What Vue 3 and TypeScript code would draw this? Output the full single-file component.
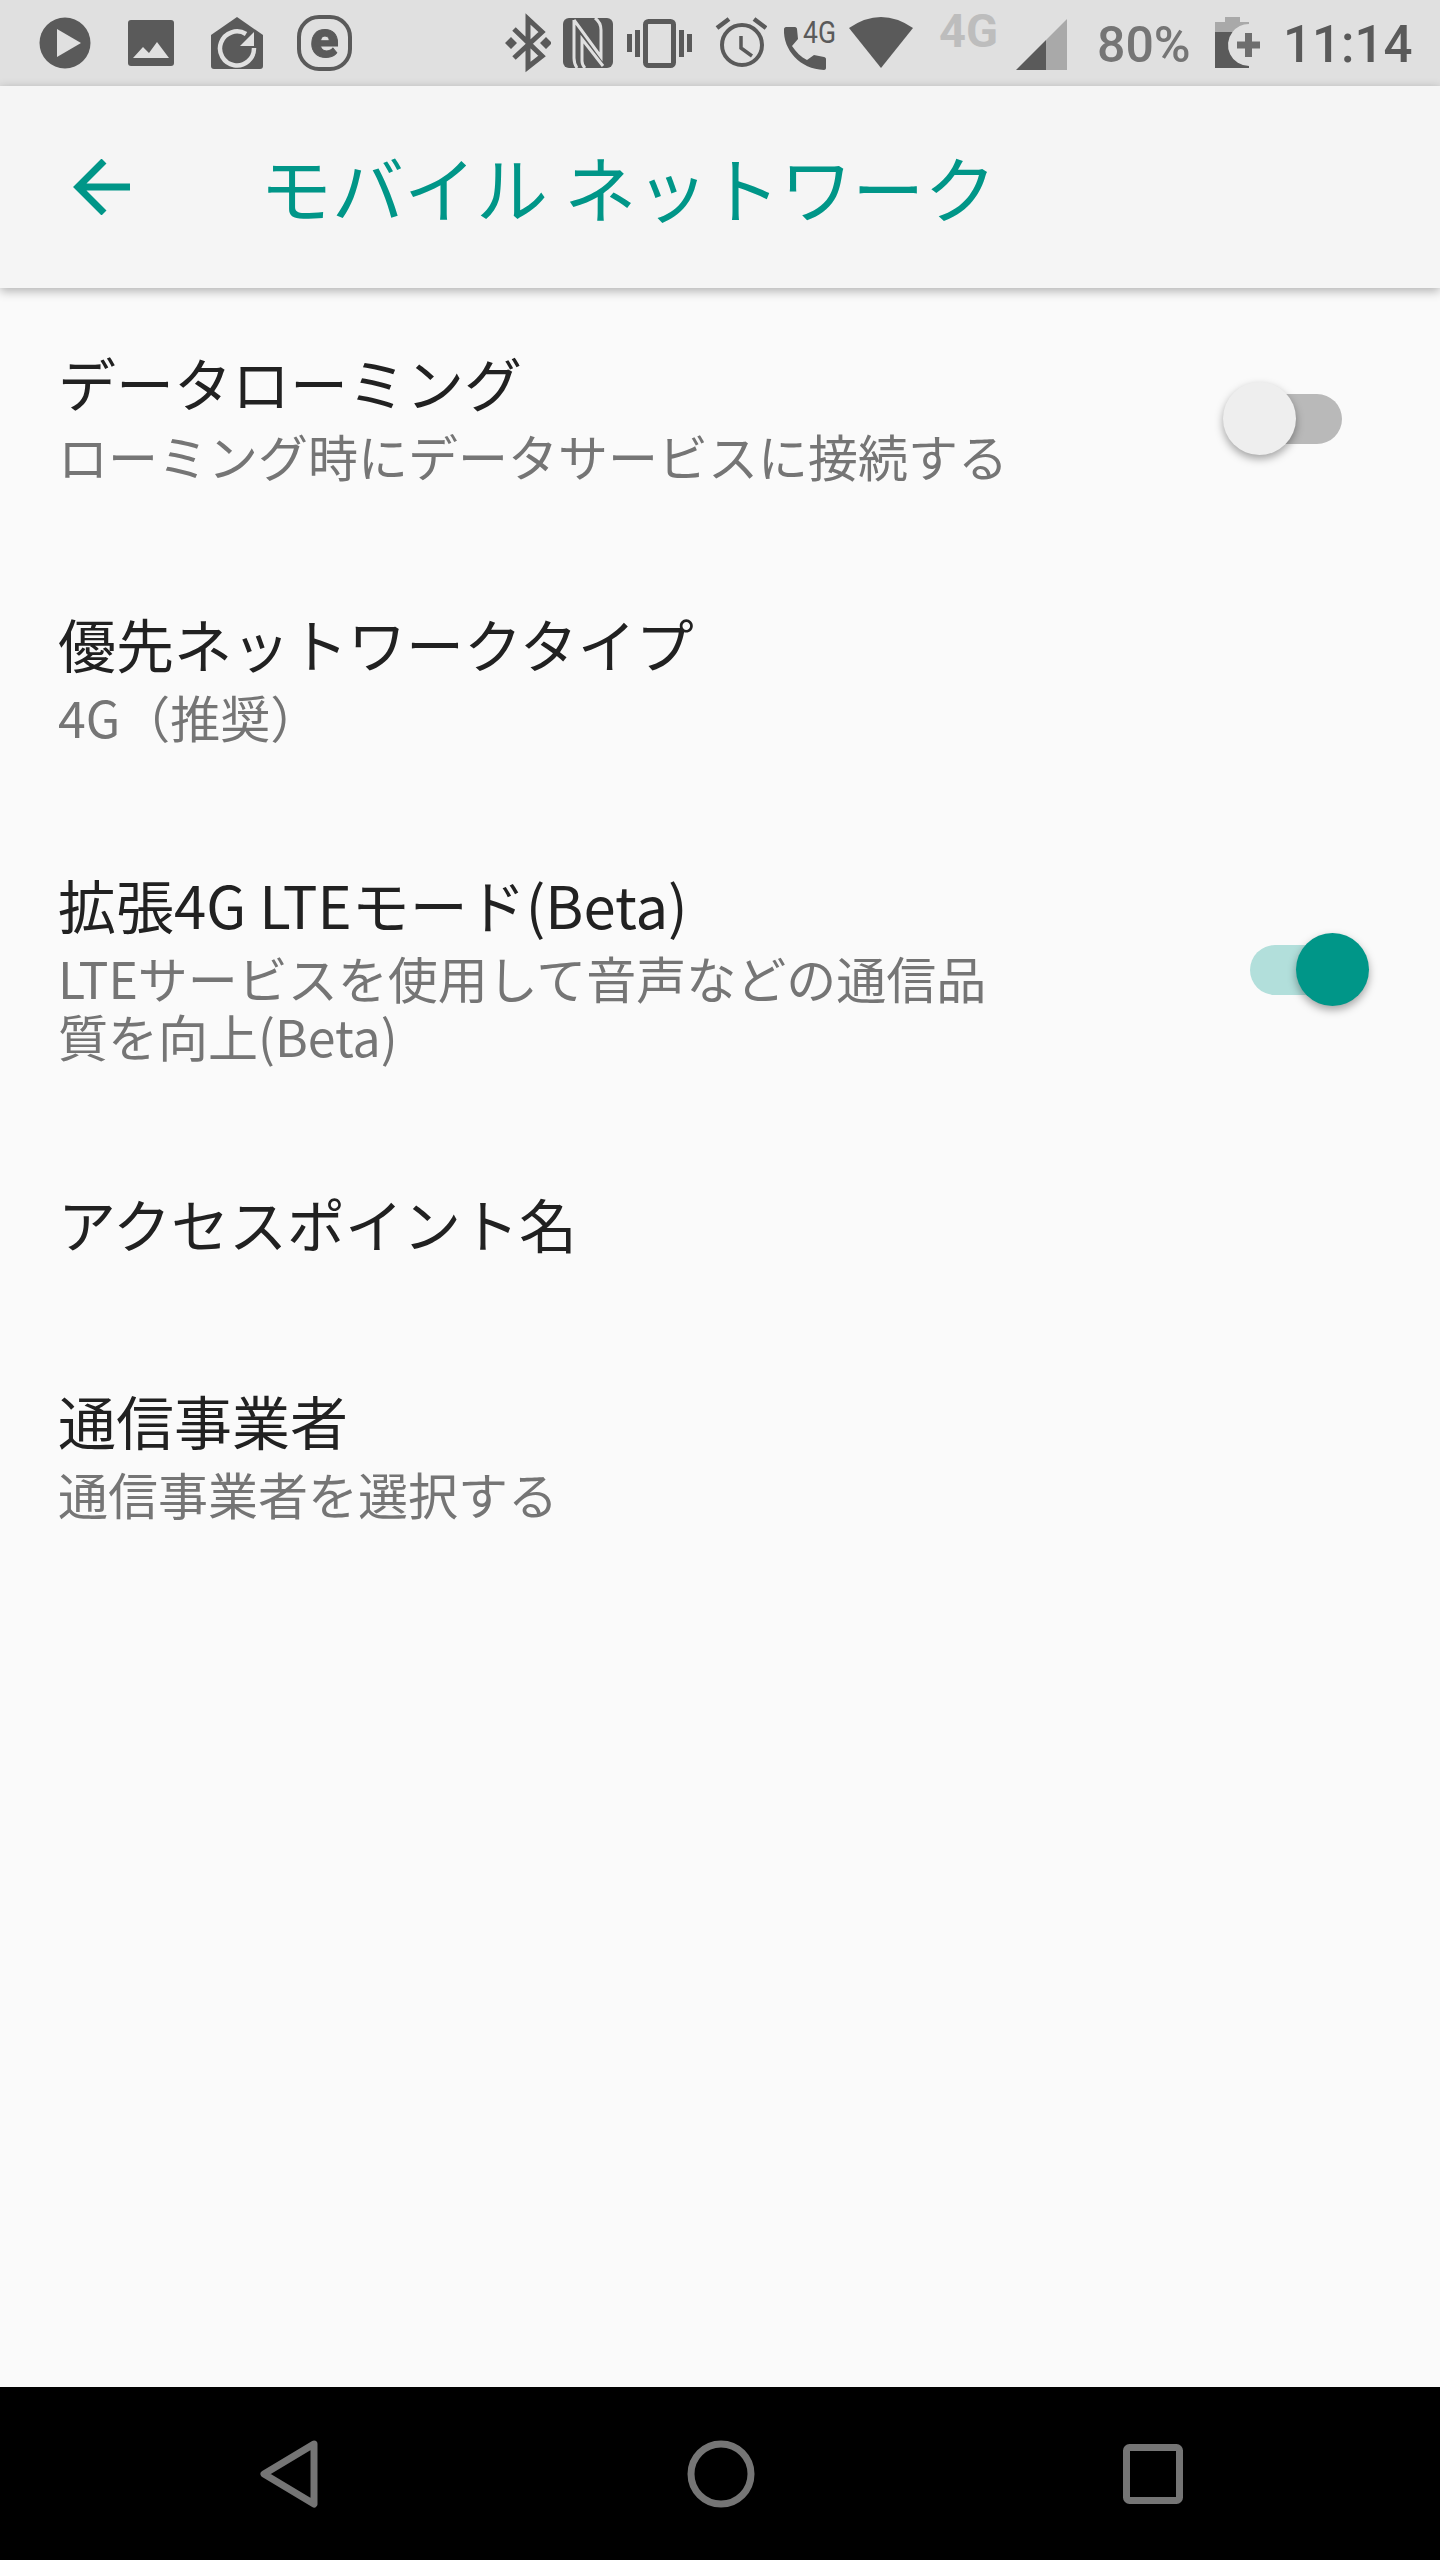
<script setup lang="ts">
interface Pref {
  title: string,
  summary?: string[],
  toggle?: 'on' | 'off'
}

const prefs: Pref[] = [
  { title: 'データローミング', summary: ['ローミング時にデータサービスに接続する'], toggle: 'off' },
  { title: '優先ネットワークタイプ', summary: ['4G（推奨）'] },
  { title: '拡張4G LTEモード(Beta)', summary: ['LTEサービスを使用して音声などの通信品', '質を向上(Beta)'], toggle: 'on' },
  { title: 'アクセスポイント名' },
  { title: '通信事業者', summary: ['通信事業者を選択する'] }
]
</script>

<template>
  <div class="screen">
    <div class="status">
      <div class="status-left">
        <svg class="ic" width="52" height="86" viewBox="39 0 52 86"><circle cx="65" cy="43" r="25.5" fill="#5a5a5a"/><path d="M57 29v28l24-14z" fill="#e0e0e0"/></svg>
        <svg class="ic ml-37" width="46" height="86" viewBox="128 0 46 86"><rect x="128" y="20" width="46" height="46" rx="3" fill="#5a5a5a"/><path d="M133 58l10-11 6 6 8-11 12 16z" fill="#e0e0e0"/></svg>
        <svg class="ic ml-37" width="52" height="86" viewBox="211 0 52 86"><path d="M237 17l26 18v31c0 2-1 3-3 3h-46c-2 0-3-1-3-3V35z" fill="#5a5a5a"/><path d="M246 34A17 17 0 1 0 254 48" fill="none" stroke="#e0e0e0" stroke-width="4.5"/><path d="M254 32v14h-14z" fill="#e0e0e0"/></svg>
        <svg class="ic ml-33" width="56" height="86" viewBox="295 0 56 86"><rect x="298" y="17" width="51" height="52" rx="20" fill="none" stroke="#5a5a5a" stroke-width="4"/><text x="323.5" y="57" text-anchor="middle" class="e-glyph">e</text></svg>
      </div>
      <div class="status-right">
        <svg class="ic" width="46" height="86" viewBox="506 0 46 86"><path d="M515 29l28 27-14 11V19l14 13-28 26" fill="none" stroke="#5a5a5a" stroke-width="5"/><path d="M506 43l6-6 6 6-6 6zM541 43l6-6 6 6-6 6z" fill="#5a5a5a"/></svg>
        <svg class="ic ml-12" width="50" height="86" viewBox="564 0 50 86"><rect x="564" y="18" width="50" height="50" rx="6" fill="#5a5a5a"/><path d="M575 20l27 37V30c0-5-2-9-6-12M604 66l-21-27v22c0 3 1 5 3 7M575 20v38c0 4 1 7 3 10" fill="none" stroke="#e0e0e0" stroke-width="3"/></svg>
        <svg class="ic ml-14" width="65" height="86" viewBox="628 0 65 86"><rect x="646.5" y="21.5" width="28" height="44" rx="3" fill="none" stroke="#5a5a5a" stroke-width="5"/><path d="M628 34h5v18h-5zM636 30h5v27h-5zM680 30h5v27h-5zM688 34h5v18h-5z" fill="#5a5a5a"/></svg>
        <svg class="ic ml-23" width="52" height="86" viewBox="716 0 52 86"><circle cx="743" cy="45" r="20" fill="none" stroke="#5a5a5a" stroke-width="4"/><path d="M742 36v12l11 8" fill="none" stroke="#5a5a5a" stroke-width="3.5"/><path d="M718 28l12-9M755 19l12 9" stroke="#5a5a5a" stroke-width="4.5"/></svg>
        <svg class="ic ml-16 clip-free" width="53" height="86" viewBox="784 0 53 86"><path d="M787 27h9c1 0 2 1 2 2l1 10-6 7c4 6 9 11 15 14l7-5 10 2c1 0 2 1 2 2v9c0 1-1 2-2 2-24-1-41-20-40-41 0-1 1-2 2-2z" fill="#5a5a5a"/><text x="804" y="43" class="t4g-small" textLength="33" lengthAdjust="spacingAndGlyphs">4G</text></svg>
        <svg class="ic ml-13" width="64" height="86" viewBox="850 0 64 86"><path d="M850 28Q882 6 914 28L882 68z" fill="#5a5a5a"/></svg>
        <span class="net-4g">4G</span>
        <svg class="ic ml-18" width="51" height="86" viewBox="1017 0 51 86"><path d="M1017 70h30V40z" fill="#5a5a5a"/><path d="M1047 70h21V19l-21 21z" fill="#a9a9a9"/></svg>
        <span class="pct">80%</span>
        <svg class="ic ml-25" width="45" height="86" viewBox="1216 0 45 86"><path d="M1226 17h15v5h9v2a21 21 0 0 0-16.500 8H1216V22h10z" fill="#a9a9a9"/><path d="M1216 32h17.500A21 21 0 0 0 1250 66v2h-34z" fill="#5a5a5a"/><path d="M1238 41.500h23v7h-23zM1246 33h7v24h-7z" fill="#6e6e6e"/></svg>
        <span class="clock">11:14</span>
      </div>
    </div>

    <div class="toolbar">
      <svg class="back" width="60" height="56" viewBox="0 0 60 56"><path d="M32 2L6 28l26 26M6 28h52" fill="none" stroke="#009688" stroke-width="7"/></svg>
      <div class="toolbar-title">モバイル ネットワーク</div>
    </div>

    <div class="prefs">
      <div v-for="p in prefs" :key="p.title" class="pref">
        <div class="pref-text">
          <div class="pref-title">{{ p.title }}</div>
          <div v-for="line in p.summary" :key="line" class="pref-summary">{{ line }}</div>
        </div>
        <div v-if="p.toggle" class="switch" :class="p.toggle">
          <div class="track"></div>
          <div class="thumb"></div>
        </div>
      </div>
    </div>

    <div class="nav">
      <svg width="58" height="68" viewBox="0 0 58 68"><path d="M54 4L4 34l50 30z" fill="none" stroke="#757575" stroke-width="7" stroke-linejoin="round"/></svg>
      <svg class="nav-home" width="68" height="68" viewBox="0 0 68 68"><circle cx="34" cy="34" r="30" fill="none" stroke="#757575" stroke-width="7"/></svg>
      <svg class="nav-recent" width="60" height="60" viewBox="0 0 60 60"><rect x="3.500" y="3.500" width="53" height="53" rx="3" fill="none" stroke="#757575" stroke-width="7"/></svg>
    </div>
  </div>
</template>

<style>
html, body {
  margin: 0;
  background: #fafafa;
}
</style>

<style scoped>
.screen {
  width: 1440px;
  height: 2560px;
  display: flex;
  flex-direction: column;
  background: #fafafa;
  font-family: "Noto Sans CJK JP", Roboto, sans-serif;
  overflow: hidden;
}

.status {
  box-sizing: border-box;
  height: 86px;
  flex: none;
  display: flex;
  justify-content: space-between;
  padding: 0 30px 0 39px;
  background: #e0e0e0;
  font-family: Roboto, sans-serif;
}

.status-left,
.status-right {
  display: flex;
  align-items: flex-start;
}

.ic { display: block; flex: none; }
.clip-free { overflow: visible; }
.ml-12 { margin-left: 12px; }
.ml-13 { margin-left: 13px; }
.ml-14 { margin-left: 14px; }
.ml-16 { margin-left: 16px; }
.ml-18 { margin-left: 18px; }
.ml-23 { margin-left: 23px; }
.ml-25 { margin-left: 25px; }
.ml-33 { margin-left: 33px; }
.ml-37 { margin-left: 37px; }

.e-glyph {
  font: 900 52px Roboto, sans-serif;
  fill: #5a5a5a;
  stroke: #5a5a5a;
  stroke-width: 1px;
}

.t4g-small {
  font: 400 32px Roboto, sans-serif;
  fill: #5a5a5a;
}

.net-4g {
  width: 59px;
  margin-left: 26px;
  margin-top: 6px;
  font-size: 47px;
  line-height: 50px;
  font-weight: 700;
  color: #bdbdbd;
}

.pct {
  width: 93px;
  margin-left: 30px;
  margin-top: 16px;
  font-size: 50px;
  line-height: 58px;
  font-weight: 500;
  color: #757575;
  white-space: nowrap;
}

.clock {
  width: 127px;
  margin-left: 23px;
  margin-top: 16px;
  font-size: 51px;
  line-height: 58px;
  font-weight: 500;
  color: #5a5a5a;
  white-space: nowrap;
}

.toolbar {
  box-sizing: border-box;
  height: 202px;
  flex: none;
  display: flex;
  align-items: center;
  padding: 0 0 0 72px;
  background: #f5f5f5;
  box-shadow: 0 3px 10px rgba(0, 0, 0, 0.3);
  position: relative;
}

.back { display: block; flex: none; }

.toolbar-title {
  margin: -3px 0 0 128px;
  font-size: 72px;
  line-height: 100px;
  color: #009688;
}

.prefs {
  flex: 1;
}

.pref {
  display: flex;
  justify-content: space-between;
  align-items: center;
  padding: 57px 71px 65px 58px;
}

.pref-title {
  font-size: 58px;
  line-height: 75px;
  color: #212121;
}

.pref-title + .pref-summary {
  margin-top: 6px;
}

.pref-summary {
  font-size: 50px;
  line-height: 58px;
  color: #757575;
}

.switch {
  width: 146px;
  height: 73px;
  margin-top: 8px;
  position: relative;
  flex: none;
}

.track {
  position: absolute;
  left: 27px;
  top: 12px;
  width: 92px;
  height: 50px;
  border-radius: 25px;
}

.thumb {
  position: absolute;
  top: 0;
  width: 73px;
  height: 73px;
  border-radius: 50%;
  box-shadow: 0 4px 8px rgba(0, 0, 0, 0.35);
}

.off .track { background: #b9b9b9; }
.off .thumb { left: 0; background: #eeeeee; }
.on .track { background: #b2dfdb; }
.on .thumb { right: 0; background: #009688; }

.nav {
  box-sizing: border-box;
  height: 173px;
  flex: none;
  display: flex;
  align-items: flex-start;
  padding: 53px 0 0 260px;
  background: #000;
}

.nav-home { margin-left: 369px; }
.nav-recent { margin: 4px 0 0 368px; }
</style>
